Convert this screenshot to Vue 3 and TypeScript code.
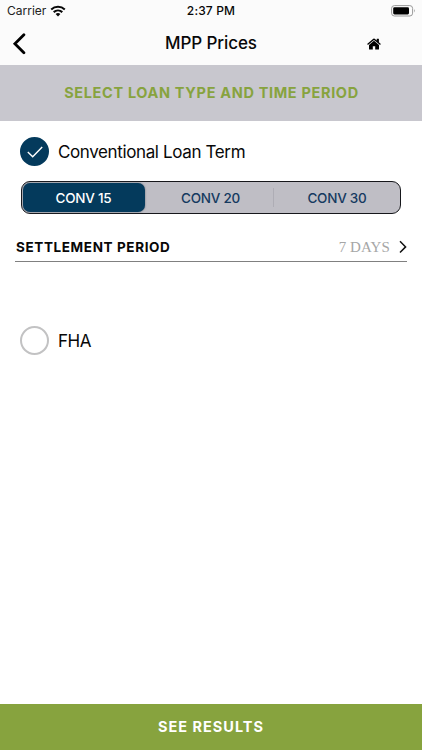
<script setup lang="ts">
import { ref } from 'vue'

type LoanType = 'conventional' | 'fha'

const terms: string[] = ['CONV 15', 'CONV 20', 'CONV 30']
const selectedTerm = ref<number>(0)
const loanType = ref<LoanType>('conventional')
const settlement = ref<string>('7 DAYS')
</script>

<template>
  <main class="screen">
    <header class="top">
      <div class="status">
        <div class="carrier">
          <span class="carrier-name">Carrier</span>
          <svg class="wifi" viewBox="0 0 16 12" aria-hidden="true">
            <path d="M1.2 4.4C5 .9 11 .9 14.8 4.4" />
            <path d="M3.7 7.1C6.2 4.9 9.8 4.9 12.3 7.1" />
            <path class="dot" d="M5.6 9.1Q8 7.1 10.4 9.1L8 11.5Z" />
          </svg>
        </div>
        <span class="time">2:37 PM</span>
        <div class="power">
          <svg class="battery" viewBox="0 0 26 12" aria-hidden="true">
            <rect class="shell" x="1.6" y=".6" width="21" height="10.4" rx="2.8" />
            <rect x="3.2" y="2.2" width="15.8" height="7.2" rx="1.3" />
            <path class="cap" d="M24 4.1Q25.7 5.8 24 7.5Z" />
          </svg>
        </div>
      </div>
      <nav class="bar">
        <button class="icon-button back" aria-label="Back">
          <svg viewBox="0 0 14 22" aria-hidden="true"><path d="M11.9 1.7 2.9 10.7l9 9" /></svg>
        </button>
        <h1>MPP Prices</h1>
        <button class="icon-button home" aria-label="Home">
          <svg viewBox="0 0 14 12" aria-hidden="true">
            <path d="M7 2.8 2 7v4.1q0 .5.5.5h3.3V8.2h2.4v3.4h3.3q.5 0 .5-.5V7Z" />
            <path d="M6.3.8Q7 .2 7.7.8L9.7 2.5V1q0-.3.3-.3h1.6q.3 0 .3.3v3.3l1.7 1.5q.3.2.1.4l-.5.6q-.2.2-.4 0L7 1.9 1.2 6.8q-.2.2-.4 0L.3 6.2q-.2-.2.1-.4Z" />
          </svg>
        </button>
      </nav>
    </header>

    <h2 class="banner"><span>SELECT LOAN TYPE AND TIME PERIOD</span></h2>

    <section class="form">
      <button class="choice" @click="loanType = 'conventional'">
        <span class="radio" :class="{ on: loanType === 'conventional' }">
          <svg v-if="loanType === 'conventional'" viewBox="0 0 16 12" aria-hidden="true"><path d="M.8 6.1 5.7 10.8 15.2 1" /></svg>
        </span>
        <span class="label">Conventional Loan Term</span>
      </button>

      <div class="segments">
        <button
          v-for="(term, index) in terms"
          :key="term"
          :class="{ active: selectedTerm === index }"
          @click="selectedTerm = index"
        >{{ term }}</button>
      </div>

      <button class="settlement">
        <span class="period">SETTLEMENT PERIOD</span>
        <span class="days">{{ settlement }}</span>
        <svg viewBox="0 0 8 14" aria-hidden="true"><path d="m1 1.3 5.6 5.6L1 12.5" /></svg>
      </button>

      <button class="choice fha" @click="loanType = 'fha'">
        <span class="radio" :class="{ on: loanType === 'fha' }">
          <svg v-if="loanType === 'fha'" viewBox="0 0 16 12" aria-hidden="true"><path d="M.8 6.1 5.7 10.8 15.2 1" /></svg>
        </span>
        <span class="label">FHA</span>
      </button>
    </section>

    <button class="results"><span>SEE RESULTS</span></button>
  </main>
</template>

<style>
body { background: #fff; }
</style>

<style scoped>
* { box-sizing: border-box; }
.screen {
  width: 100%;
  height: 100vh;
  display: flex;
  flex-direction: column;
  background: #fff;
  color: #080808;
  font-family: Inter, "Liberation Sans", sans-serif;
  overflow: hidden;
}
button {
  margin: 0;
  padding: 0;
  border: 0;
  background: none;
  color: inherit;
  font: inherit;
  white-space: nowrap;
}
svg { display: block; fill: none; }
.top { height: 65px; flex: none; background: #fbfbfb; }
.status {
  height: 22px;
  display: grid;
  grid-template-columns: 1fr auto 1fr;
  align-items: center;
  padding: 0 6px 1px 7px;
  font-size: 12px;
}
.carrier { display: flex; align-items: center; gap: 4px; }
.carrier-name { letter-spacing: 0; color: #222; }
.wifi { width: 16px; height: 12px; stroke: #080808; stroke-width: 2.1; }
.wifi .dot { fill: #080808; stroke: none; }
.time { font-weight: 550; font-size: 12px; letter-spacing: .15px; padding-right: 1px; }
.power { display: flex; justify-content: flex-end; }
.battery { width: 26px; height: 12px; fill: #000; }
.battery .shell { fill: none; stroke: #999; stroke-width: 1; }
.battery .cap { fill: #999; }
.bar {
  height: 43px;
  display: grid;
  grid-template-columns: 96px 1fr 96px;
  align-items: center;
}
h1 {
  margin: 0;
  padding-bottom: 1px;
  text-align: center;
  font-size: 17px;
  line-height: 22px;
  font-weight: 550;
  letter-spacing: -.1px;
}
.icon-button { display: flex; }
.back { padding-left: 12px; }
.back svg { width: 14px; height: 22px; stroke: #000; stroke-width: 2.8; stroke-linecap: round; }
.home { justify-content: center; }
.home svg { width: 14px; height: 12px; fill: #000; }
.banner {
  height: 56px;
  flex: none;
  margin: 0;
  display: flex;
  align-items: center;
  justify-content: center;
  background: #c8c7ce;
  color: #87a33e;
  font-size: 14.5px;
  line-height: 18px;
  font-weight: 650;
  letter-spacing: .66px;
  white-space: nowrap;
}
.banner span { padding-left: 1px; }
.form { flex: 1; padding: 15px 15px 0 15px; display: flex; flex-direction: column; }
.choice {
  height: 30px;
  display: flex;
  align-items: center;
  gap: 8.5px;
  padding-left: 5.4px;
  font-size: 17px;
}
.label { padding-top: 2px; letter-spacing: -.37px; }
.radio {
  width: 29px;
  height: 29px;
  display: grid;
  place-items: center;
  border: 2px solid #c2c2c3;
  border-radius: 50%;
}
.radio.on { border-color: #043a5c; background: #043a5c; }
.radio svg { width: 16px; height: 12px; margin-top: 2px; stroke: #fff; stroke-width: 1.4; }
.segments {
  height: 33px;
  display: grid;
  grid-template-columns: 122px 1fr 126px;
  margin: 15px 6px 0 6px;
  padding: 1px;
  border: 1px solid #16171b;
  border-radius: 9px;
  background: #bfbec5;
}
.segments button {
  display: flex;
  align-items: center;
  justify-content: center;
  color: #153a60;
  font-size: 13.5px;
  font-weight: 500;
  letter-spacing: -.25px;
}
.segments button:nth-child(2) { padding-left: 3px; }
.segments button:last-child { padding-left: 2px; background: linear-gradient(#aeadb5, #aeadb5) 0 50% / 1px 19px no-repeat; }
.segments button.active {
  padding-right: 1px;
  color: #fff;
  background: #043a5c;
  border-radius: 7px;
  box-shadow: 0 0 2px #5d6673;
}
.settlement {
  height: 31px;
  margin-top: 17px;
  padding: 2px 0 0 1px;
  display: flex;
  align-items: center;
  border-bottom: 1px solid #808080;
}
.period { font-size: 13.5px; font-weight: 700; letter-spacing: .62px; }
.days {
  margin-left: auto;
  color: #a6a6a6;
  font-family: "Liberation Serif", serif;
  font-size: 15px;
  letter-spacing: .1px;
}
.settlement svg { width: 8px; height: 14px; margin: 0 0 1px 9px; stroke: #111; stroke-width: 1.5; }
.fha { margin-top: 63px; }
.results {
  height: 46px;
  flex: none;
  padding-bottom: 1px;
  display: flex;
  align-items: center;
  justify-content: center;
  background: #87a33e;
  color: #fff;
  font-size: 14.5px;
  font-weight: 650;
  letter-spacing: 1px;
}
</style>
